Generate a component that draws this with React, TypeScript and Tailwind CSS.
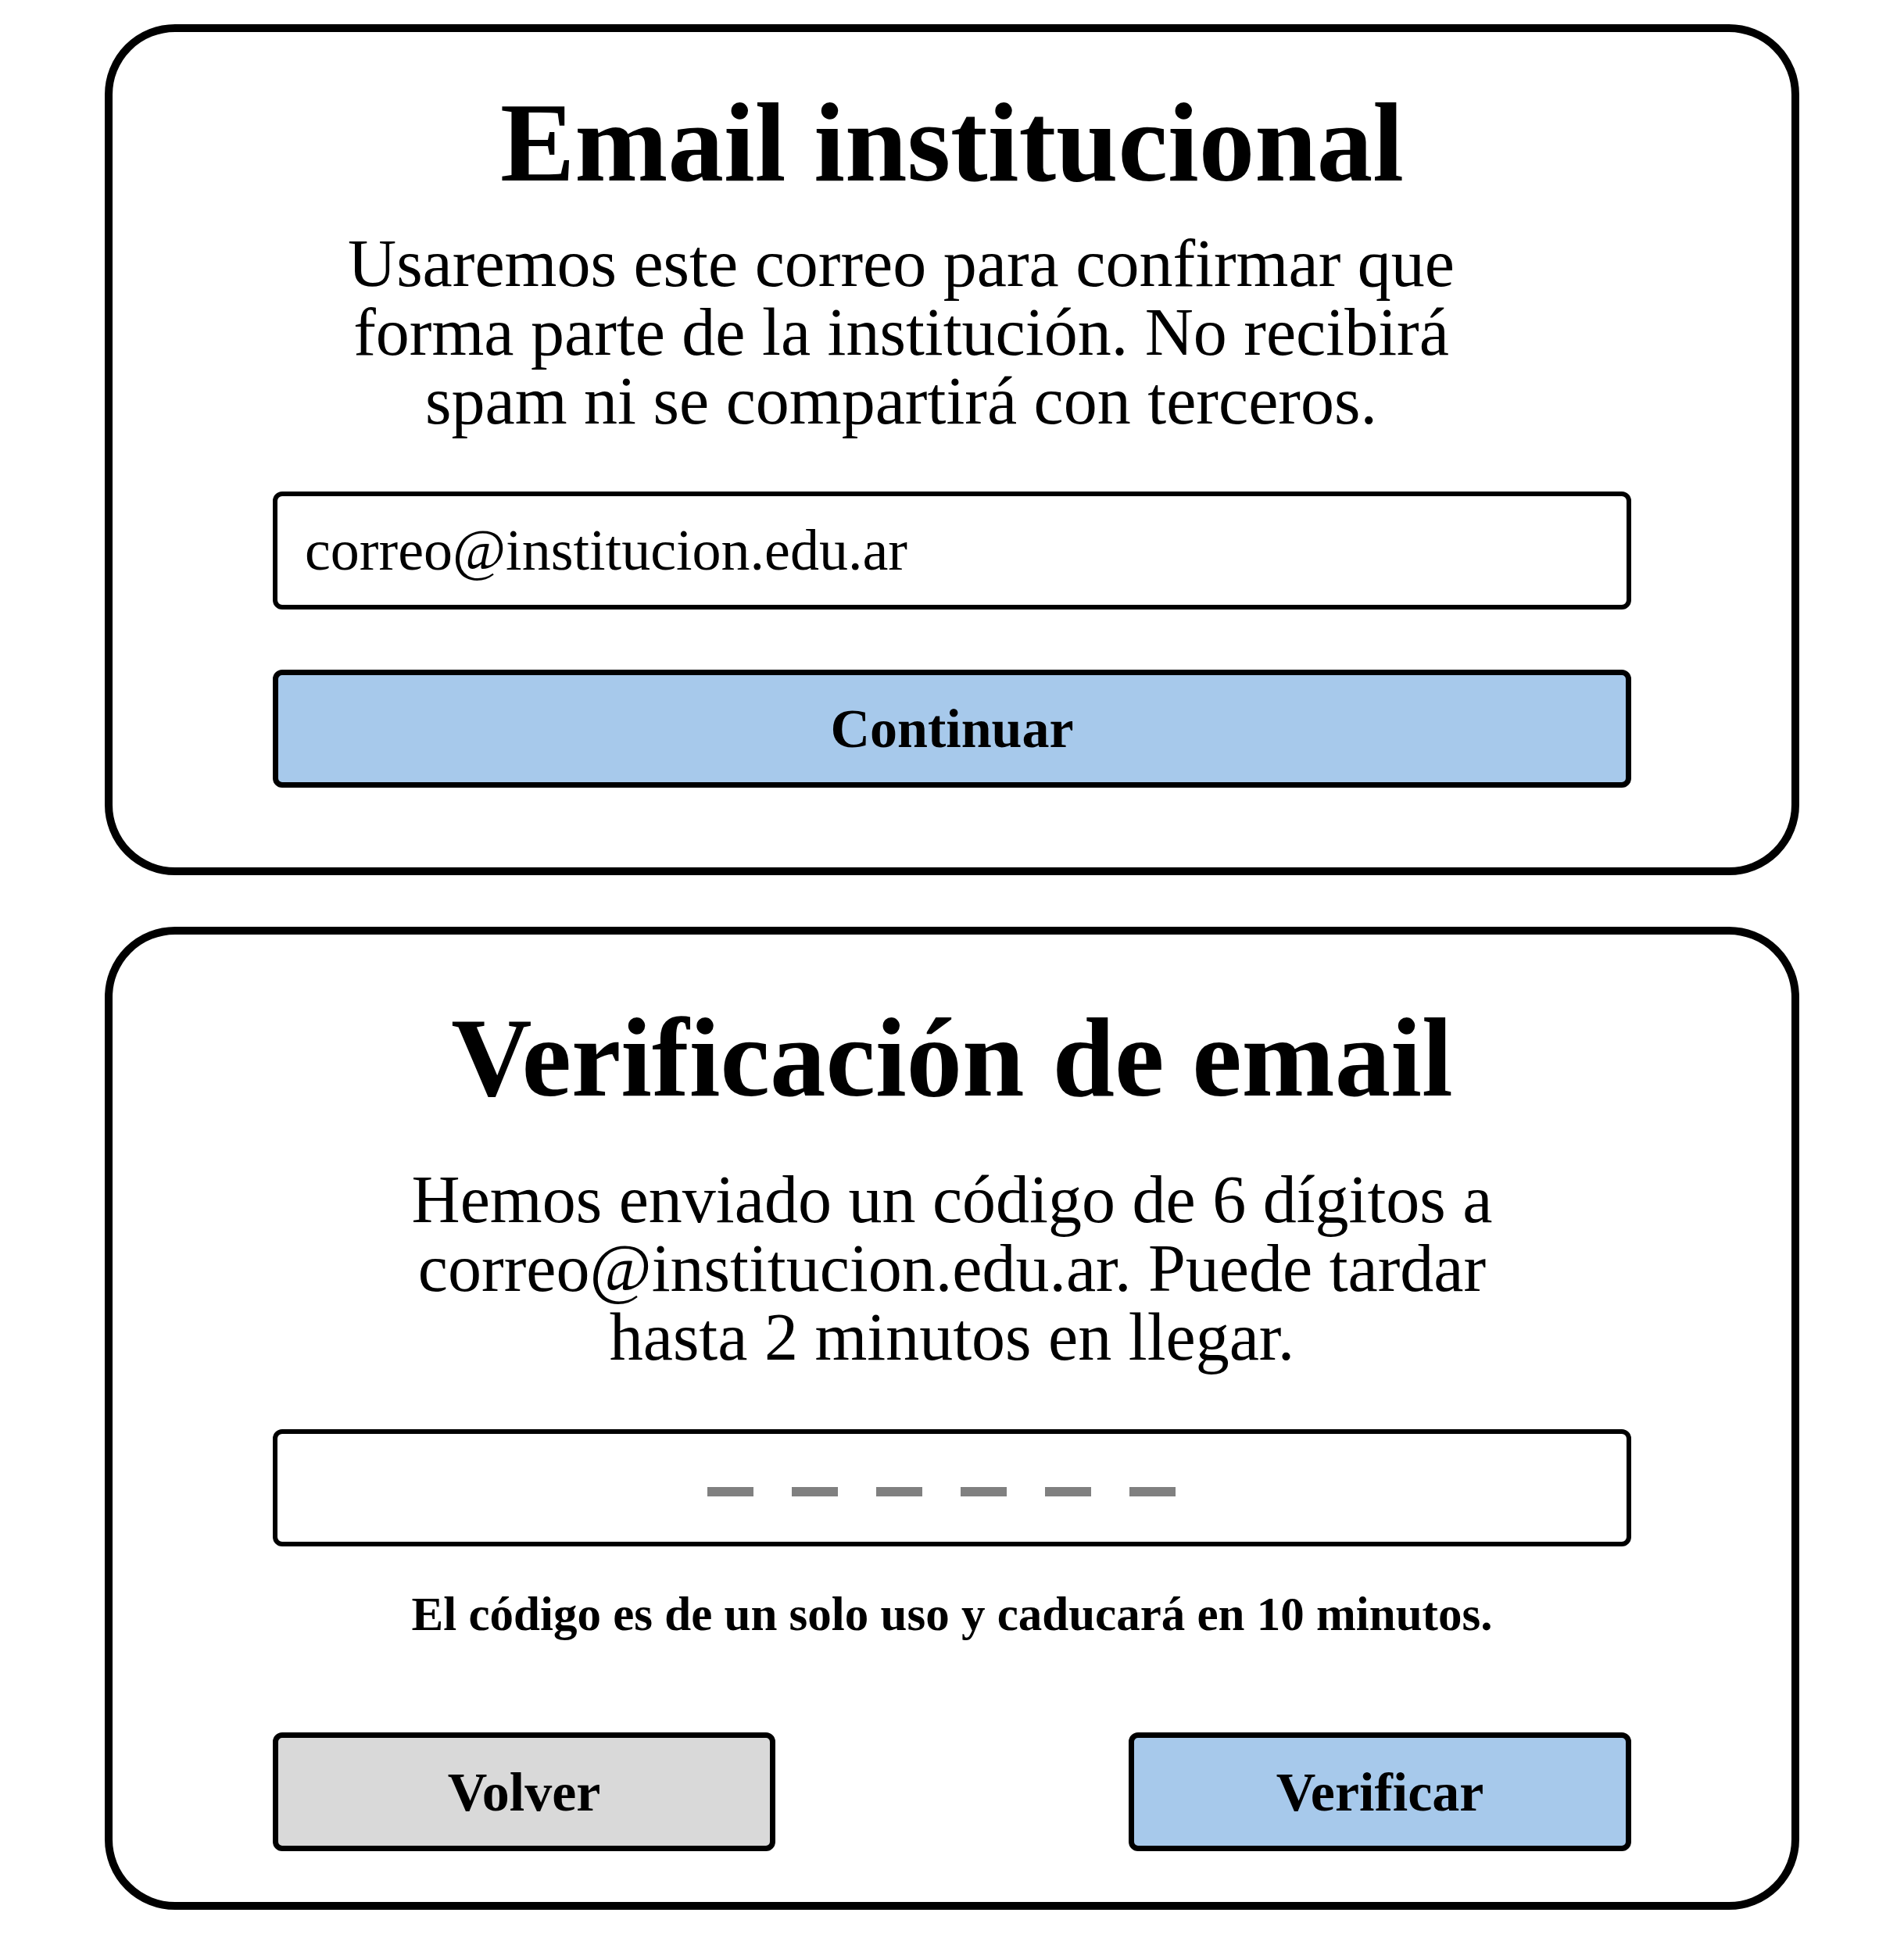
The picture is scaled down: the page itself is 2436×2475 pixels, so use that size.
const serif = "font-['Liberation_Serif',_'Times_New_Roman',_serif]";

const Card = ({ className, children }: { className: string; children: React.ReactNode }) => (
  <section
    className={`flex flex-col items-center rounded-[90px] border-[10px] border-black bg-white px-[205px] ${className}`}
  >
    {children}
  </section>
);

const Title = ({ children }: { children: React.ReactNode }) => (
  <h1 className="text-center text-[143px] font-bold leading-[143px] text-black">{children}</h1>
);

const Lead = ({ className, children }: { className: string; children: React.ReactNode }) => (
  <p className={`text-center text-[86px] leading-[88px] text-black ${className}`}>{children}</p>
);

const EmailStep = () => (
  <Card className="pt-[71px] pb-[102px]">
    <Title>Email institucional</Title>
    {/* the lead paragraph sits a little left of centre in this card */}
    <Lead className="mt-[38px] max-w-[1610px] pr-[130px]">
      Usaremos este correo para confirmar que forma parte de la institución. No recibirá spam ni se compartirá con
      terceros.
    </Lead>
    <div className="mt-[72px] flex h-[151px] w-full items-center rounded-[12px] border-[6px] border-black bg-white pl-[35px]">
      <span className="text-[74px] text-black">correo@institucion.edu.ar</span>
    </div>
    <button
      type="button"
      className="mt-[77px] flex h-[151px] w-full items-center justify-center rounded-[12px] border-[7px] border-black bg-[#a7c9eb] text-[70px] font-bold text-black"
    >
      Continuar
    </button>
  </Card>
);

const VerifyStep = () => (
  <Card className="pt-[87px] pb-[65px]">
    <Title>Verificación de email</Title>
    <Lead className="mt-[65px] max-w-[1480px]">
      Hemos enviado un código de 6 dígitos a correo@institucion.edu.ar. Puede tardar hasta 2 minutos en llegar.
    </Lead>
    <div className="mt-[74px] flex h-[150px] w-full items-center justify-center gap-[49px] rounded-[12px] border-[6px] border-black bg-white pt-[9px] pr-[28px]">
      {[0, 1, 2, 3, 4, 5].map((i) => (
        <span key={i} className="h-[12px] w-[59px] bg-[#808080]" />
      ))}
    </div>
    <p className="mt-[50px] text-center text-[61px] font-bold leading-[73px] text-black">
      El código es de un solo uso y caducará en 10 minutos.
    </p>
    <div className="mt-[115px] flex w-full justify-between">
      <button
        type="button"
        className="flex h-[152px] w-[643px] items-center justify-center rounded-[12px] border-[7px] border-black bg-[#d9d9d9] text-[70px] font-bold text-black"
      >
        Volver
      </button>
      <button
        type="button"
        className="flex h-[152px] w-[643px] items-center justify-center rounded-[12px] border-[7px] border-black bg-[#a7c9eb] text-[70px] font-bold text-black"
      >
        Verificar
      </button>
    </div>
  </Card>
);

export default function App() {
  return (
    <main className={`flex min-h-[2475px] w-[2436px] flex-col gap-[66px] bg-white px-[134px] pt-[31px] ${serif}`}>
      <EmailStep />
      <VerifyStep />
    </main>
  );
}
